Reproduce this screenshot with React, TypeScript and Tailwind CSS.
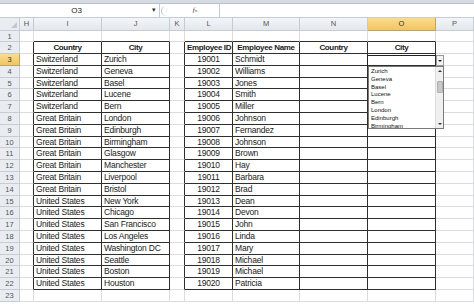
import React from "react"

const FONT = { fontFamily: '"Liberation Sans", Arial, sans-serif' }

const colKeys = ["H", "I", "J", "K", "L", "M", "N", "O", "P"]

const rows: [string, string, string, string][] = [
  ["Switzerland", "Zurich", "19001", "Schmidt"],
  ["Switzerland", "Geneva", "19002", "Williams"],
  ["Switzerland", "Basel", "19003", "Jones"],
  ["Switzerland", "Lucene", "19004", "Smith"],
  ["Switzerland", "Bern", "19005", "Miller"],
  ["Great Britain", "London", "19006", "Johnson"],
  ["Great Britain", "Edinburgh", "19007", "Fernandez"],
  ["Great Britain", "Birmingham", "19008", "Johnson"],
  ["Great Britain", "Glasgow", "19009", "Brown"],
  ["Great Britain", "Manchester", "19010", "Hay"],
  ["Great Britain", "Liverpool", "19011", "Barbara"],
  ["Great Britain", "Bristol", "19012", "Brad"],
  ["United States", "New York", "19013", "Dean"],
  ["United States", "Chicago", "19014", "Devon"],
  ["United States", "San Francisco", "19015", "John"],
  ["United States", "Los Angeles", "19016", "Linda"],
  ["United States", "Washington DC", "19017", "Mary"],
  ["United States", "Seattle", "19018", "Michael"],
  ["United States", "Boston", "19019", "Michael"],
  ["United States", "Houston", "19020", "Patricia"],
]

const cities = ["Zurich", "Geneva", "Basel", "Lucene", "Bern", "London", "Edinburgh", "Birmingham"]

// table areas: cols I,J and L..O, rows 2..22
const inTable = (c: number, r: number) => r >= 2 && r <= 22 && (c === 1 || c === 2 || (c >= 4 && c <= 7))

function cellContent(c: number, r: number): { text: string; bold?: boolean; align?: string } | null {
  if (r === 2) {
    const heads: Record<number, string> = { 1: "Country", 2: "City", 4: "Employee ID", 5: "Employee Name", 6: "Country", 7: "City" }
    return heads[c] ? { text: heads[c], bold: true, align: "center" } : null
  }
  if (r >= 3 && r <= 22) {
    const d = rows[r - 3]
    if (c === 1) return { text: d[0] }
    if (c === 2) return { text: d[1] }
    if (c === 4) return { text: d[2], align: "center" }
    if (c === 5) return { text: d[3] }
  }
  return null
}

function Cell({ c, r }: { c: number; r: number }) {
  const darkR = inTable(c, r) || inTable(c + 1, r)
  const darkB = inTable(c, r) || inTable(c, r + 1)
  const content = cellContent(c, r)
  return (
    <div
      className={`h-[11.8px] border-r border-b overflow-hidden whitespace-nowrap leading-[11.5px] px-[2px] text-[#1a1a1a] ${
        darkR ? "border-r-[#2e2e2e]" : "border-r-[#dadcdd]"
      } ${darkB ? "border-b-[#2e2e2e]" : "border-b-[#dadcdd]"} ${
        content?.bold ? "font-bold text-[8px] tracking-[-0.35px] px-0" : "text-[8.5px] tracking-[-0.2px]"
      } ${content?.align === "center" ? "text-center" : ""}`}
    >
      {content?.text}
    </div>
  )
}

export default function App() {
  const rowNums = Array.from({ length: 23 }, (_, i) => i + 1)
  return (
    <div className="w-[474px] h-[304px] overflow-hidden bg-white relative" style={FONT}>
      {/* ribbon edge */}
      <div className="h-[4px] bg-[#d5dbe3] border-b border-[#b9c1cc]" />
      {/* formula bar */}
      <div className="h-[14px] flex items-center bg-white border-b border-[#c5ccd6]">
        <div className="w-[160px] h-full flex items-center border-r border-[#c5ccd6]">
          <div className="flex-1 text-center text-[8px] text-[#222] pl-[4px]">O3</div>
          <div className="w-[10px] text-[7px] text-[#333] text-center">▾</div>
        </div>
        <div className="w-[10px] h-[10px] ml-[1px] rounded-l-full border-l border-[#b7bfca] flex items-center justify-center text-[6px] text-[#8a95a3]">
          :
        </div>
        <div className="w-[48px] flex items-center justify-center text-[7px] italic text-[#333]" style={{ fontFamily: '"Liberation Serif", serif' }}>
          f<span className="text-[5px] not-italic">x</span>
        </div>
        <div className="flex-1 h-full border-l border-[#c5ccd6]" />
      </div>
      {/* sheet grid */}
      <div className="grid grid-cols-[20px_14px_68px_68px_15px_48px_67px_68px_68px_1fr]">
        {/* column headers */}
        <div className="h-[12.5px] bg-[#e9edf2] border-r border-b border-[#c6ccd5] relative">
          <div className="absolute right-[2px] bottom-[2px] w-0 h-0 border-l-[6px] border-l-transparent border-b-[6px] border-b-[#c3c8cf]" />
        </div>
        {colKeys.map((k) => (
          <div
            key={k}
            className={`h-[12.5px] border-r border-b text-[7.5px] leading-[12px] text-center ${
              k === "O"
                ? "bg-gradient-to-b from-[#f9dd8e] to-[#f1c463] border-[#c9a24a] text-[#333]"
                : "bg-gradient-to-b from-[#f3f5f8] to-[#e3e8ee] border-[#c6ccd5] text-[#555]"
            }`}
          >
            {k}
          </div>
        ))}
        {rowNums.map((r) => (
          <React.Fragment key={r}>
            <div
              className={`h-[11.8px] border-r border-b text-[7.5px] leading-[11px] text-center ${
                r === 3
                  ? "bg-gradient-to-b from-[#f9dd8e] to-[#f1c463] border-[#c9a24a] text-[#333]"
                  : "bg-[#e9edf2] border-[#c6ccd5] text-[#555]"
              }`}
            >
              {r}
            </div>
            {colKeys.map((_, c) => (
              <Cell key={c} c={c} r={r} />
            ))}
          </React.Fragment>
        ))}
      </div>

      {/* active cell O3 selection + dropdown button */}
      <div className="absolute left-[367px] top-[54.5px] w-[70px] h-[12.8px] border border-[#222]" />
      <div className="absolute left-[436px] top-[55px] w-[8px] h-[11px] bg-[#f2f2f2] border border-[#9a9a9a] flex items-center justify-center">
        <div className="w-0 h-0 border-l-[2px] border-r-[2px] border-t-[2px] border-l-transparent border-r-transparent border-t-[#222]" />
      </div>

      {/* dropdown list */}
      <div className="absolute left-[368px] top-[66px] w-[76px] h-[63px] bg-white border border-[#7a7a7a] flex overflow-hidden">
        <div className="flex-1 pt-[1px] pl-[2px]">
          {cities.map((c) => (
            <div key={c} className="h-[7.8px] text-[6px] leading-[7.8px] text-[#111] whitespace-nowrap">
              {c}
            </div>
          ))}
        </div>
        <div className="w-[8px] h-full bg-[#f0f0f0] border-l border-[#dcdcdc] flex flex-col items-center">
          <div className="h-[8px] flex items-center justify-center">
            <div className="w-0 h-0 border-l-[2px] border-r-[2px] border-b-[2px] border-l-transparent border-r-transparent border-b-[#333]" />
          </div>
          <div className="mt-[6px] w-[6px] h-[12px] bg-[#c8c8c8] border border-[#b0b0b0] rounded-[1px]" />
          <div className="flex-1" />
          <div className="h-[8px] flex items-center justify-center">
            <div className="w-0 h-0 border-l-[2px] border-r-[2px] border-t-[2px] border-l-transparent border-r-transparent border-t-[#333]" />
          </div>
        </div>
      </div>
    </div>
  )
}
